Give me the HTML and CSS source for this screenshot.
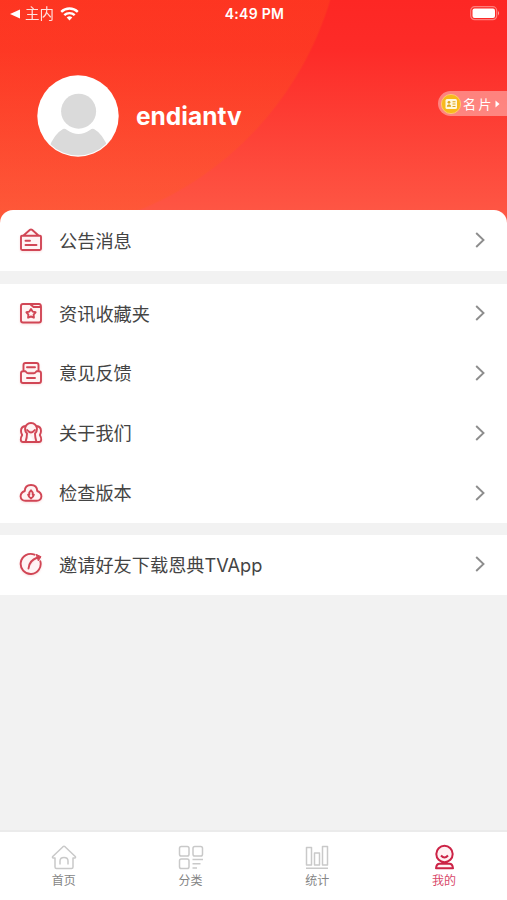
FILE: index.html
```html
<!DOCTYPE html>
<html lang="zh-CN">
<head>
<meta charset="utf-8">
<title>我的</title>
<link rel="stylesheet" href="styles.css">
</head>
<body>
<div class="app">
  <header class="hero">
    <div class="status">
      <div class="status-left">
        <svg class="back" width="10" height="10" viewBox="0 0 10 10"><path d="M0 5 10 .5v9z" fill="#fff"/></svg>
        <span class="carrier">主内</span>
        <svg width="19" height="14" viewBox="0 0 19 14"><g fill="none" stroke="#fff" stroke-width="2.4"><path d="M1.2 4.8a12 12 0 0 1 16.6 0"/><path d="M4.3 8.2a7.5 7.5 0 0 1 10.4 0"/></g><path d="M6.700 10.600a4 4 0 0 1 5.600 0L9.500 13.600z" fill="#fff"/></svg>
      </div>
      <span class="time">4:49 PM</span>
      <svg class="battery" width="30" height="15" viewBox="0 0 30 15"><rect x=".7" y=".7" width="26" height="13" rx="4" fill="none" stroke="#fff" stroke-opacity=".4" stroke-width="1.2"/><rect x="2.500" y="2.500" width="22.500" height="9.500" rx="2" fill="#fff"/><path d="M28 5q2 2.200 0 4.500z" fill="#fff" fill-opacity=".6"/></svg>
    </div>
    <div class="profile">
      <svg class="avatar" width="82" height="82" viewBox="0 0 82 82"><defs><clipPath id="face"><circle cx="41" cy="41" r="39.500"/></clipPath></defs><circle cx="41" cy="41" r="40.700" fill="#fff"/><g fill="#dadada" clip-path="url(#face)"><circle cx="41.600" cy="36.200" r="17.500"/><path d="M12 73Q17 59 26 54q2-.8 4 1 11.500 8 23 0 2-1.800 4-1 9 5 14 19v9H12z"/></g></svg>
      <h1 class="name">endiantv</h1>
      <div class="card-link">
        <svg width="20" height="20" viewBox="0 0 20 20"><circle cx="10" cy="10" r="9.600" fill="#f7b91c" stroke="#ffd276" stroke-width=".8"/><rect x="4.500" y="5" width="11.500" height="10" rx="1.500" fill="#fff8df"/><circle cx="8" cy="8.300" r="1.400" fill="#dfa619"/><path d="M5.800 12.700q0-2.500 2.200-2.500t2.200 2.500zM11.500 7.300h3v1h-3zM11.500 9.600h3v1h-3zM11.500 11.900h3v1h-3z" fill="#dfa619"/></svg>
        <span>名片</span>
        <svg width="5" height="8" viewBox="0 0 5 8"><path d="M.5.500 4.500 4 .5 7.500z" fill="#fff"/></svg>
      </div>
    </div>
  </header>
  <main class="menu">
    <section class="group first">
      <div class="row"><svg class="icon" viewBox="0 0 24 24"><path d="M3 7.800h18q1 0 1 1v12q0 1.200-1.200 1.200H3.200Q2 22 2 20.800v-12q0-1 1-1zM4.500 7.500 11 1.800q1-.8 2 0l6.500 5.700M6.500 12.700h4.500M6.500 17h11"/></svg><span>公告消息</span><svg class="chevron" viewBox="0 0 10 16"><path d="m1.200 1 7.300 7-7.300 7"/></svg></div>
    </section>
    <section class="group">
      <div class="row"><svg class="icon" viewBox="0 0 24 24"><path d="M4 3h7l3.500 3H22v13.500q0 2-2 2H4q-2 0-2-2V5q0-2 2-2zM11 3h9q2 0 2 3M12 8l1.600 2.600 3 .7-2 2.300.3 3.100-2.900-1.200-2.900 1.200.3-3.100-2-2.300 3-.7z"/></svg><span>资讯收藏夹</span><svg class="chevron" viewBox="0 0 10 16"><path d="m1.200 1 7.300 7-7.300 7"/></svg></div>
      <div class="row"><svg class="icon" viewBox="0 0 24 24"><path d="M4.500 10V4q0-2 2-2h11q2 0 2 2v6M8 6.300h8M4 10.300h2.500q1.200 2 2.500 2h6q1.300 0 2.500-2H20q2 0 2 2v7.700q0 2-2 2H4q-2 0-2-2v-7.700q0-2 2-2zM8 17h8"/></svg><span>意见反馈</span><svg class="chevron" viewBox="0 0 10 16"><path d="m1.200 1 7.300 7-7.300 7"/></svg></div>
      <div class="row"><svg class="icon" viewBox="0 0 24 24"><path d="M6.500 5Q2 5.500 2 10q0 2 1.200 4Q1.500 16.500 1.800 19q.2 2 2.200 2h13M17.500 5q4.500.5 4.500 5 0 2-1.200 4 1.700 2.500 1.400 5-.2 2-2.200 2h-4M6 8a6 6 0 0 1 12 0q0 2.500-2 4.500 0 4 1.500 8.500h-11Q8 16.500 8 12.500 6 10.500 6 8zM8.200 9q3.800 5 7.600 0"/></svg><span>关于我们</span><svg class="chevron" viewBox="0 0 10 16"><path d="m1.200 1 7.300 7-7.300 7"/></svg></div>
      <div class="row"><svg class="icon" viewBox="0 0 24 24"><path d="M6.500 19.800Q2 19.800 1.600 15.500 1.600 11.500 5.800 10q.2-6 6.200-6t6.200 6q4.200 1.500 4.200 5.500-.4 4.300-4.900 4.300zM12 9.300l1.700 2.200v2.200h1.200Q14.500 16 12 17.500 9.500 16 9.100 13.700h1.200v-2.200z"/></svg><span>检查版本</span><svg class="chevron" viewBox="0 0 10 16"><path d="m1.200 1 7.300 7-7.300 7"/></svg></div>
    </section>
    <section class="group">
      <div class="row"><svg class="icon" viewBox="0 0 24 24"><path d="M15.500 2.700a10 10 0 1 0 5.800 6.500M9.500 16.500Q10 8.500 18.500 5.500"/><path class="tip" d="m17.500 2.500 4.500 2.200-2.500 3.800z"/></svg><span>邀请好友下载恩典TVApp</span><svg class="chevron" viewBox="0 0 10 16"><path d="m1.200 1 7.300 7-7.300 7"/></svg></div>
    </section>
  </main>
  <nav class="tabs">
    <div class="tab"><svg viewBox="0 0 26 26"><path d="M4 14H2.200q-1.400-.5-.2-1.700L12 2.700q1-.8 2 0l10 9.600q1.200 1.200-.2 1.700H22v9q0 1.500-1.500 1.500h-15Q4 24.500 4 23zM9 20.500v-3.500q0-3.500 4-3.500t4 3.500v3.500"/></svg><span>首页</span></div>
    <div class="tab"><svg viewBox="0 0 26 26"><rect x="1.500" y="2.500" width="9.500" height="9.500" rx="1.800"/><rect x="15" y="2.500" width="9.500" height="9.500" rx="1.800"/><rect x="1.500" y="15" width="9.500" height="9.500" rx="1.800"/><path d="M14.500 15.500h10.500M14.500 19.700h8M14.500 24h4.500"/></svg><span>分类</span></div>
    <div class="tab"><svg viewBox="0 0 26 26"><path d="M2.500 3.500h5v17.500h-5zM10.500 9h5v12h-5zM18.500 2.500h5v18.500h-5zM2 24.300h22"/></svg><span>统计</span></div>
    <div class="tab active"><svg viewBox="0 0 26 26"><circle cx="13.500" cy="10" r="8.200"/><path d="M10 11.500q3.500 4 7 0M8.500 19.800h10q3 0 3.500 4.500H5q.5-4.500 3.500-4.500z"/></svg><span>我的</span></div>
  </nav>
</div>
</body>
</html>
```
FILE: styles.css
```css
* { box-sizing: border-box; }
body {
  margin: 0;
  font-family: Inter, "Noto Sans CJK SC", sans-serif;
  color: #444;
  background: #f2f2f2;
}
svg { display: block; flex: none; }
.app {
  height: 900px;
  display: flex;
  flex-direction: column;
  overflow: hidden;
}
.hero {
  flex: none;
  height: 224px;
  color: #fff;
  background:
    radial-gradient(circle at 16px -94px, rgba(255, 92, 25, .27) 327px, transparent 329px),
    linear-gradient(#fd2724 0, #fd2b28 50px, #fe5644 212px);
}
.status {
  height: 27px;
  padding: 0 7px 0 10px;
  display: grid;
  grid-template-columns: 1fr auto 1fr;
  align-items: center;
}
.status-left { display: flex; align-items: center; }
.carrier { margin: 0 6px 0 5px; font-size: 14.500px; line-height: 20px; opacity: .85; }
.time { font-size: 14px; font-weight: 600; letter-spacing: .3px; margin-right: 1px; }
.battery { justify-self: end; }
.profile {
  height: 82px;
  margin-top: 48px;
  padding-left: 37px;
  display: flex;
  align-items: center;
}
.name { margin: 0 0 0 17px; font-size: 24.500px; line-height: 30px; font-weight: 700; }
.card-link {
  margin: 0 0 25px auto;
  width: 69px;
  height: 25px;
  padding-left: 3px;
  display: flex;
  align-items: center;
  gap: 2px;
  border-radius: 13px 0 0 13px;
  background: rgba(255, 255, 255, .38);
  font-size: 13px;
}
.card-link span { letter-spacing: 2.500px; font-weight: 400; line-height: 20px; }
.card-link svg:last-child { margin-left: -1px; }
.menu {
  flex: 1;
  margin-top: -14px;
  display: flex;
  flex-direction: column;
  gap: 12px;
}
.group { background: #fff; }
.first { border-radius: 13px 13px 0 0; padding-top: 1px; margin-bottom: 1px; }
.row {
  height: 59.800px;
  padding: 0 22px 0 19px;
  display: flex;
  align-items: center;
  font-size: 18.200px;
}
.row span { flex: 1; margin-left: 16px; line-height: 28px; }
.icon {
  width: 24px;
  height: 24px;
  margin-top: -1px;
  fill: #fff4f4;
  stroke: #d14655;
  stroke-width: 1.900;
  stroke-linejoin: round;
  stroke-linecap: round;
  filter: drop-shadow(0 1px 1px rgba(230, 70, 80, .18));
}
.icon .tip { fill: #d14655; stroke-width: 1; }
.chevron { width: 10px; height: 16px; margin-top: -1px; fill: none; stroke: #8d8d8d; stroke-width: 1.900; }
.tabs {
  flex: none;
  height: 70px;
  border-top: 2px solid #ebebeb;
  background: #fff;
  display: grid;
  grid-template-columns: repeat(4, 1fr);
}
.tab {
  display: flex;
  flex-direction: column;
  align-items: center;
  gap: 2px;
  padding: 12px 0 0 1px;
  font-size: 12px;
  line-height: 18px;
  color: #858585;
}
.tab svg {
  width: 26px;
  height: 26px;
  fill: none;
  stroke: #c9c9c9;
  stroke-width: 1.500;
  stroke-linejoin: round;
}
.tab.active { color: #d8486a; }
.tab.active svg { stroke: #cc2346; stroke-width: 2; fill: #fff1f3; }
```
